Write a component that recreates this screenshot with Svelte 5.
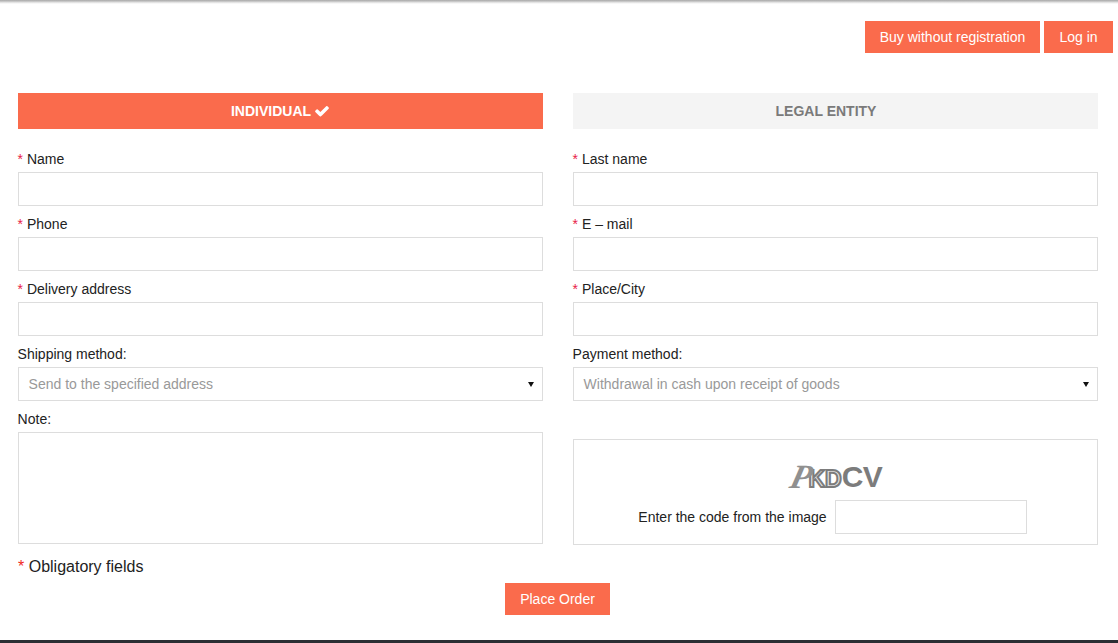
<script>
  const left = [
    { label: 'Name', req: true },
    { label: 'Phone', req: true },
    { label: 'Delivery address', req: true }
  ];
  const right = [
    { label: 'Last name', req: true },
    { label: 'E – mail', req: true },
    { label: 'Place/City', req: true }
  ];
  const checkPath = 'M1671 566q0 40-28 68l-724 724-136 136q-28 28-68 28t-68-28l-136-136-362-362q-28-28-28-68t28-68l136-136q28-28 68-28t68 28l294 295 656-657q28-28 68-28t68 28l136 136q28 28 28 68z';
</script>

<div class="page">
  <div class="topline"></div>
  <header class="actions">
    <button class="btn buy">Buy without registration</button>
    <button class="btn login">Log in</button>
  </header>

  <form class="form">
    <div class="grid">
      <div class="col">
        <div class="tab active">
          INDIVIDUAL
          <svg class="check" viewBox="0 0 1792 1792" aria-hidden="true"><path d={checkPath} /></svg>
        </div>
        {#each left as f}
          <div class="field">
            <div class="label"><span class="star">*</span> {f.label}</div>
            <input class="control" type="text" />
          </div>
        {/each}
        <div class="field">
          <div class="label">Shipping method:</div>
          <div class="select control">Send to the specified address</div>
        </div>
        <div class="field">
          <div class="label">Note:</div>
          <textarea class="control note"></textarea>
        </div>
      </div>

      <div class="col">
        <div class="tab">
          LEGAL ENTITY
          <svg class="check hidden" viewBox="0 0 1792 1792" aria-hidden="true"><path d={checkPath} /></svg>
        </div>
        {#each right as f}
          <div class="field">
            <div class="label"><span class="star">*</span> {f.label}</div>
            <input class="control" type="text" />
          </div>
        {/each}
        <div class="field">
          <div class="label">Payment method:</div>
          <div class="select control">Withdrawal in cash upon receipt of goods</div>
        </div>
        <div class="captcha">
          <div class="code">
            <span class="c-p">P</span><span class="c-k">K</span><span class="c-d">D</span><span class="c-v">CV</span>
          </div>
          <div class="code-row">
            <span>Enter the code from the image</span>
            <input class="control code-input" type="text" />
          </div>
        </div>
      </div>
    </div>

    <div class="oblig"><span class="star-big">*</span> Obligatory fields</div>
    <div class="submit"><button class="btn place" type="button">Place Order</button></div>
  </form>
  <footer class="foot"></footer>
</div>

<style>
  :global(body) {
    margin: 0;
    background: #fff;
  }
  .page {
    font-family: "Liberation Sans", Arial, sans-serif;
    font-size: 14px;
    color: #222;
    height: 643px;
    display: flex;
    flex-direction: column;
    overflow: hidden;
  }
  .topline {
    height: 4px;
    flex: none;
    background: linear-gradient(#a8a8a8, #c6c6c6 35%, #ececec 70%, #fff);
  }
  .actions {
    display: flex;
    justify-content: flex-end;
    gap: 4px;
    padding: 17px 5px 0 0;
  }
  .btn {
    height: 32px;
    padding: 0;
    border: 0;
    background: #fa6b4c;
    color: #fff;
    font: 14px "Liberation Sans", Arial, sans-serif;
  }
  .buy { width: 175px; }
  .login { width: 69px; }
  .place { width: 105px; }
  .form {
    flex: 1;
    padding: 40px 21px 0 18px;
  }
  .grid {
    display: grid;
    grid-template-columns: 525px 525px;
    column-gap: 30px;
  }
  .col {
    display: flex;
    flex-direction: column;
  }
  .tab {
    height: 36px;
    display: flex;
    align-items: center;
    justify-content: center;
    gap: 3px;
    background: #f4f4f4;
    color: #7a7a7a;
    font-weight: 700;
    margin-bottom: 20px;
  }
  .tab.active {
    background: #fa6b4c;
    color: #fff;
  }
  .check {
    width: 16px;
    height: 16px;
    fill: #fff;
  }
  .check.hidden {
    visibility: hidden;
  }
  .field {
    margin-bottom: 8px;
  }
  .label {
    height: 20px;
    line-height: 20px;
    margin-bottom: 3px;
    margin-left: -0.4px;
  }
  .star {
    color: #e8214a;
  }
  .control {
    display: block;
    box-sizing: border-box;
    width: 100%;
    height: 34px;
    margin: 0;
    border: 1px solid #ddd;
    border-radius: 0;
    background: #fff;
    outline: 0;
    font: 14px "Liberation Sans", Arial, sans-serif;
  }
  .select {
    position: relative;
    padding: 0 9.6px;
    line-height: 32px;
    color: #999;
  }
  .select::after {
    content: "";
    position: absolute;
    right: 8px;
    top: 14px;
    border-left: 3px solid transparent;
    border-right: 3px solid transparent;
    border-top: 5px solid #111;
  }
  .note {
    height: 112px;
    resize: none;
  }
  .captcha {
    box-sizing: border-box;
    height: 106px;
    margin-top: 30px;
    border: 1px solid #ddd;
    display: flex;
    flex-direction: column;
    align-items: center;
    padding-top: 22px;
  }
  .code {
    height: 27px;
    line-height: 27px;
    margin-left: 2px;
    color: #7c7c7c;
    font-size: 29px;
    font-weight: 700;
    white-space: nowrap;
  }
  .c-p {
    display: inline-block;
    font-family: "Liberation Serif", serif;
    font-style: italic;
    font-size: 34px;
    letter-spacing: -3px;
    color: #909090;
    transform: translateY(1px) skewX(-14deg);
  }
  .c-k, .c-d {
    font-family: "Liberation Sans", sans-serif;
    font-size: 23px;
    color: #e6e6e6;
    -webkit-text-stroke: 2px #7c7c7c;
    letter-spacing: 0;
  }
  .c-v {
    font-family: "Liberation Sans", sans-serif;
    font-size: 30px;
    letter-spacing: -0.5px;
  }
  .code-row {
    display: flex;
    align-items: center;
    gap: 8px;
    margin-top: 11px;
    padding-right: 6px;
  }
  .code-input {
    width: 192px;
  }
  .oblig {
    height: 22px;
    line-height: 22px;
    margin-top: 4px;
    font-size: 16px;
  }
  .star-big {
    color: #f02a1e;
  }
  .submit {
    display: flex;
    justify-content: center;
    margin-top: 5px;
  }
  .foot {
    height: 3px;
    flex: none;
    background: #2b2e33;
  }
</style>
